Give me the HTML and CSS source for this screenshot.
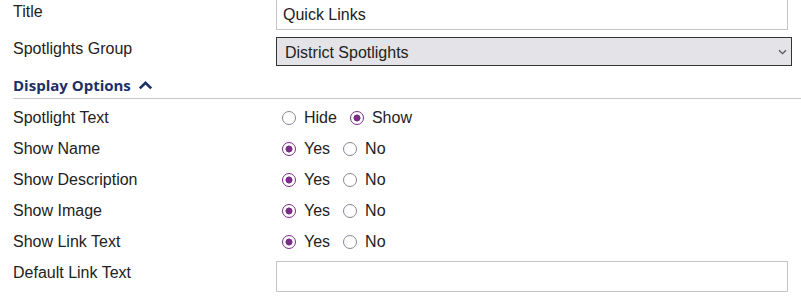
FILE: index.html
```html
<!DOCTYPE html>
<html lang="en">
<head>
    <meta charset="UTF-8">
    <meta name="viewport" content="width=device-width, initial-scale=1.0">
    <title>Spotlight Settings</title>
    <link rel="stylesheet" href="styles.css">
</head>
<body>
    <form class="settings">
        <div class="field">
            <label for="title">Title</label>
            <input type="text" id="title" class="text-input" value="Quick Links">
        </div>
        <div class="field field-select">
            <label for="group">Spotlights Group</label>
            <div class="select-wrap">
                <select id="group" class="select-input">
                    <option>District Spotlights</option>
                </select>
                <svg class="select-caret" width="9" height="6" viewBox="0 0 9 6"><path d="M1 1.2 4.5 4.6 8 1.2" fill="none" stroke="#555" stroke-width="1.3"/></svg>
            </div>
        </div>

        <h3 class="section-title">Display Options
            <svg class="section-caret" width="15" height="10" viewBox="0 0 15 10"><path d="M1.8 8.4 7.5 2.8 13.2 8.4" fill="none" stroke="#1c3064" stroke-width="2.7"/></svg>
        </h3>

        <div class="options">
            <div class="option-row">
                <span class="option-label">Spotlight Text</span>
                <div class="radios">
                    <label class="radio"><input type="radio" name="spotText"> Hide</label>
                    <label class="radio"><input type="radio" name="spotText" checked> Show</label>
                </div>
            </div>
            <div class="option-row">
                <span class="option-label">Show Name</span>
                <div class="radios">
                    <label class="radio"><input type="radio" name="showName" checked> Yes</label>
                    <label class="radio"><input type="radio" name="showName"> No</label>
                </div>
            </div>
            <div class="option-row">
                <span class="option-label">Show Description</span>
                <div class="radios">
                    <label class="radio"><input type="radio" name="showDesc" checked> Yes</label>
                    <label class="radio"><input type="radio" name="showDesc"> No</label>
                </div>
            </div>
            <div class="option-row">
                <span class="option-label">Show Image</span>
                <div class="radios">
                    <label class="radio"><input type="radio" name="showImage" checked> Yes</label>
                    <label class="radio"><input type="radio" name="showImage"> No</label>
                </div>
            </div>
            <div class="option-row">
                <span class="option-label">Show Link Text</span>
                <div class="radios">
                    <label class="radio"><input type="radio" name="showLink" checked> Yes</label>
                    <label class="radio"><input type="radio" name="showLink"> No</label>
                </div>
            </div>
        </div>

        <div class="field field-last">
            <label for="linkText">Default Link Text</label>
            <input type="text" id="linkText" class="text-input">
        </div>
    </form>
</body>
</html>
```

FILE: styles.css
```css
body {
    font-family: "Liberation Sans", Arial, sans-serif;
    font-size: 16px;
    color: #222;
    background: #fff;
    margin: 0;
}
.settings {
    margin-top: -1px;
    padding-left: 13px;
}
.field {
    display: grid;
    grid-template-columns: 263px 1fr;
    align-items: start;
}
.field label {
    padding-top: 4px;
    line-height: 18px;
}
.text-input {
    box-sizing: border-box;
    width: 512px;
    height: 31px;
    margin: 0;
    padding: 0 6px;
    border: 1px solid #c4c4c4;
    font-family: inherit;
    font-size: 16px;
    color: #222;
    background: #fff;
}
.field-select {
    margin-top: 7px;
}
.field-select label {
    padding-top: 3px;
}
.select-wrap {
    position: relative;
    width: 516px;
}
.select-input {
    appearance: none;
    -webkit-appearance: none;
    box-sizing: border-box;
    width: 100%;
    height: 29px;
    margin: 0;
    padding: 1px 8px 0;
    border: 1px solid #333;
    border-radius: 0;
    background: #e4e3e8;
    font-family: inherit;
    font-size: 16px;
    color: #222;
}
.select-caret {
    position: absolute;
    right: 5px;
    top: 12px;
    pointer-events: none;
}
.section-title {
    margin: 9px 0 0;
    padding-bottom: 3px;
    border-bottom: 1px solid #c8c8c8;
    font-family: "Open Sans", sans-serif;
    font-size: 15px;
    font-weight: 700;
    line-height: 20px;
    color: #1c3064;
}
.section-caret {
    vertical-align: 1px;
    margin-left: 3px;
}
.options {
    margin-top: 3px;
}
.option-row {
    display: grid;
    grid-template-columns: 263px 1fr;
    align-items: center;
    height: 31px;
}
.radios {
    display: flex;
    gap: 13px;
    padding-left: 6px;
}
.radio {
    display: flex;
    align-items: center;
    gap: 8px;
}
.radio input {
    appearance: none;
    -webkit-appearance: none;
    box-sizing: border-box;
    width: 14px;
    height: 14px;
    margin: 0;
    border: 1.6px solid #8a8597;
    border-radius: 50%;
    background: #fff;
}
.radio input:checked {
    border: 1.8px solid #7b2c88;
    background: radial-gradient(circle, #7b2c88 0 3.2px, #fff 3.8px);
}
.field-last {
    margin-top: 4px;
}
.field-last label {
    padding-top: 3px;
}
```
